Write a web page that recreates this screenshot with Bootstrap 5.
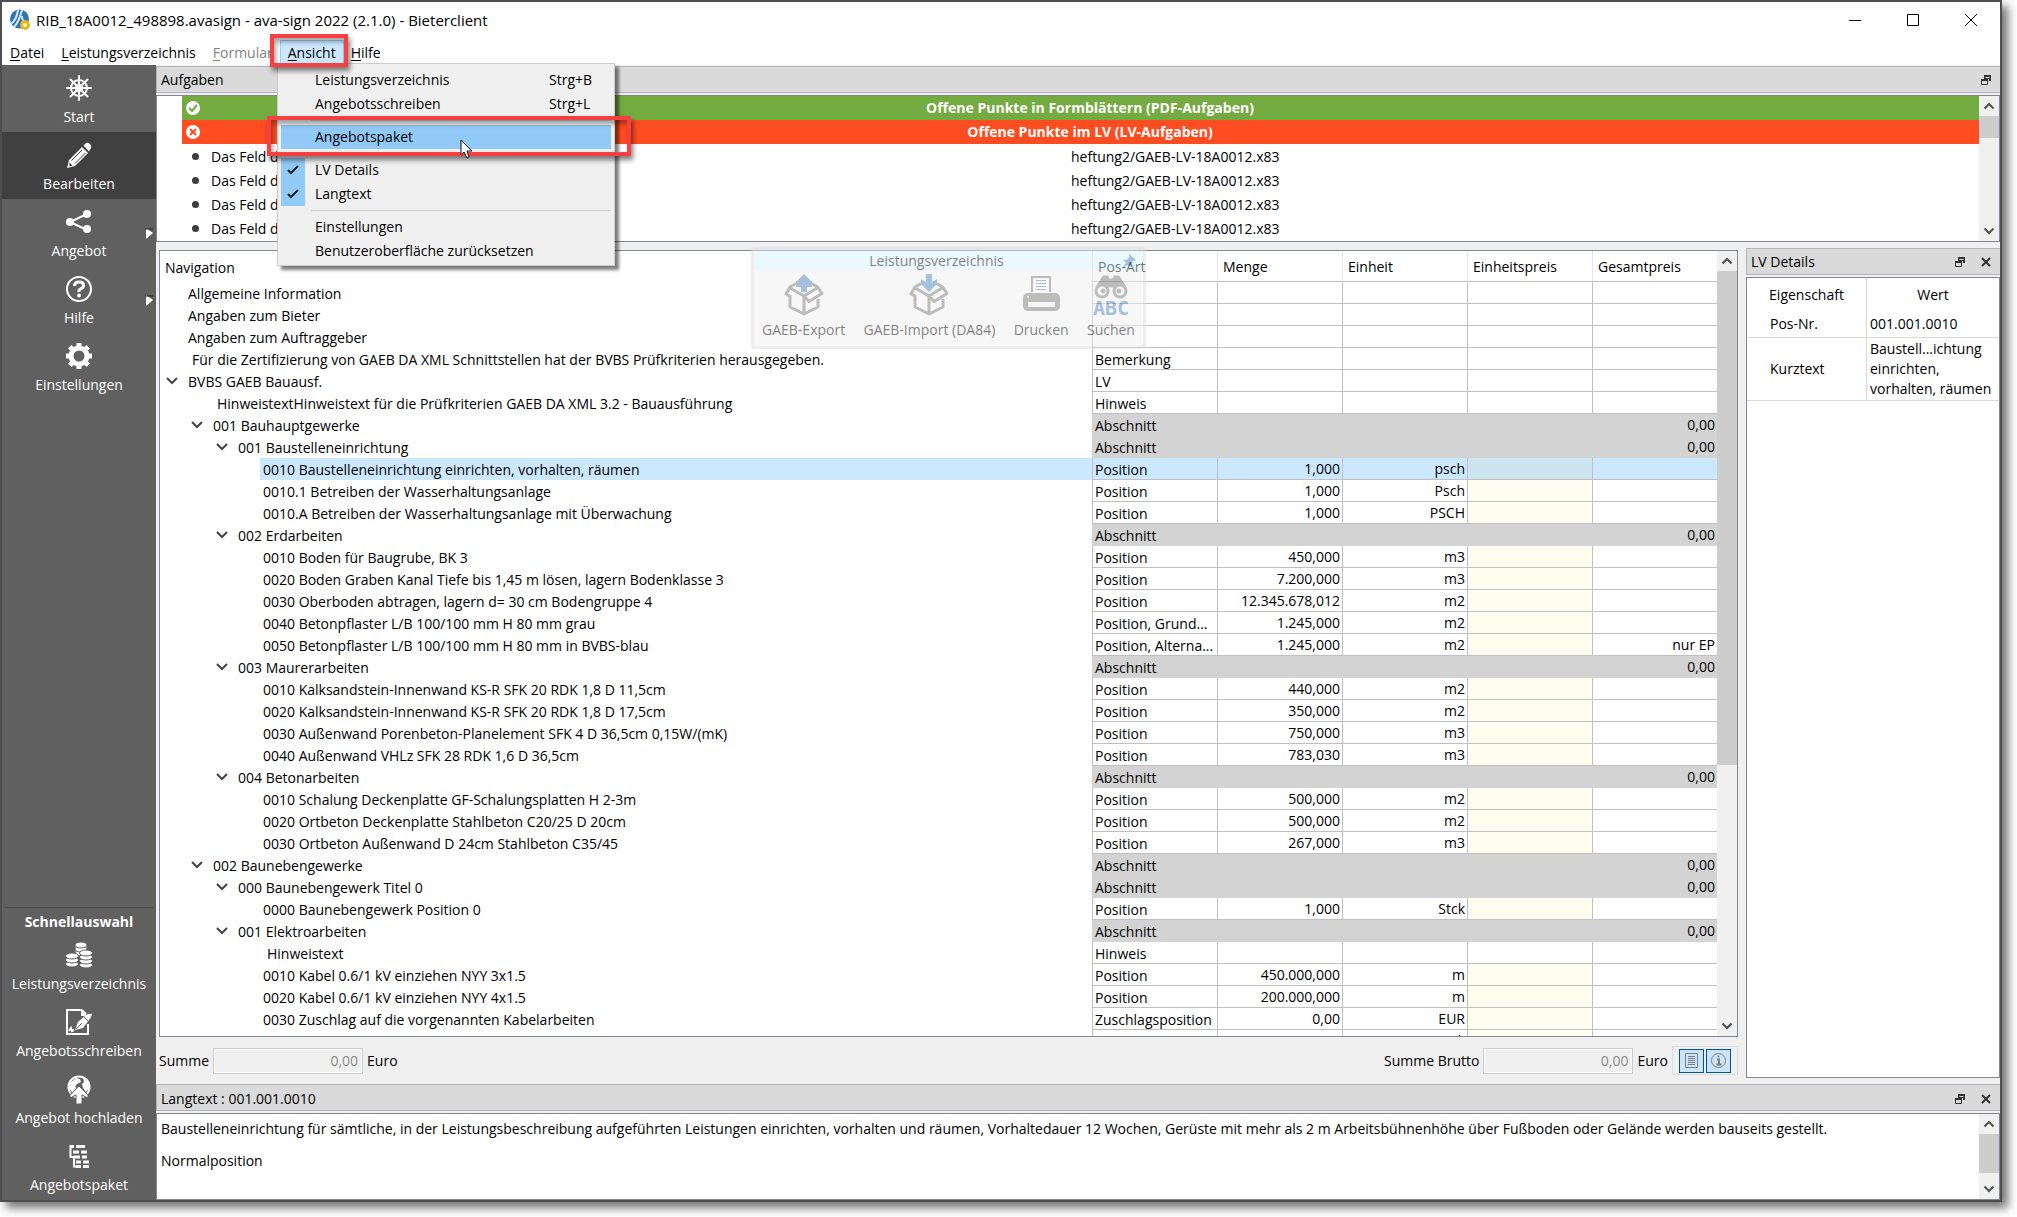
<!DOCTYPE html>
<html lang="de">
<head>
<meta charset="utf-8">
<meta name="viewport" content="width=device-width, initial-scale=1">
<title>RIB_18A0012_498898.avasign - ava-sign 2022 (2.1.0) - Bieterclient</title>
<link href="https://cdn.jsdelivr.net/npm/bootstrap@5.3.0/dist/css/bootstrap.min.css" rel="stylesheet">
<style>
  body { font-family: "Open Sans", "Noto Sans", sans-serif; font-size: 14px; line-height: 20px; color: #000; background: #fff; }
  .desk { height: 100vh; padding: 0 15px 15px 0; }
  .app-window { background: #f0f0f0; border: 2px solid #4e4e50; box-shadow: 6px 6px 9px rgba(0,0,0,.55); }
  button, input { font: inherit; color: inherit; }
  .flat { border: 0; background: none; padding: 0; line-height: 0; }

  .titlebar { height: 38px; padding: 0 0 1px 8px; background: #fff; }
  .titlebar > svg { margin-right: 6px; }
  .app-title { font-size: 15px; }
  .win-btn { width: 58px; height: 36px; }
  .menubar { height: 25px; background: #fff; padding-left: 1px; }
  .menubar button { border: 1px solid transparent; background: none; padding: 0 6px; height: 25px; line-height: 23px; margin-right: 3px; }
  .menubar u { text-underline-offset: 2px; }
  .menubar button.opened { background: #cce8ff; border-color: #99d1ff; padding: 0 7px; margin: 0; }
  .menubar button.fm { color: #838383; margin-right: 0; }

  .sidebar { width: 154px; flex: none; background: #606060; }
  .side-item { display: flex; flex-direction: column; align-items: center; gap: 4px; width: 100%; height: 67px; padding-top: 8px; border: 0; background: none; color: #fff; position: relative; }
  .side-item.current { background: #404040; }
  .side-item svg { width: 30px; height: 30px; }
  .side-item .fly { position: absolute; right: 3px; top: 28px; width: 8px; height: 12px; }
  .quick-title { border-top: 1px solid #4b4b4b; margin: 0 3px; padding: 4px 0 0; text-align: center; color: #fff; font-weight: 700; }

  .dockbar { height: 27px; border: 1px solid #b5b5b5; border-right: 0; background: #dadada; padding: 2px 8px 0 4px; }
  .dockbar .gap-x { gap: 14px; }
  .pane { background: #fff; border: 1px solid #828790; }
  .sbar { width: 20px; flex: none; background: #f0f0f0; display: flex; flex-direction: column; }
  .sbar button { height: 20px; width: 20px; flex: none; }
  .sbar .thumb { background: #cdcdcd; }

  .first-dock { margin-top: 1px; }
  .tasks { height: 147px; margin-top: 2px; flex: none; }
  .task-head { height: 24px; margin-left: 25px; padding-left: 3px; color: #fff; font-weight: 700; }
  .task-head.ok { background: #74ab41; }
  .task-head.bad { background: #ff4c20; }
  .task-line { height: 24px; padding: 2px 0 0 35px; }
  .task-line i { width: 7px; height: 7px; border-radius: 50%; background: #3c3c3c; margin-right: 12px; }
  .task-text { width: 860px; }

  .work { padding-left: 3px; }
  .lv { table-layout: fixed; width: 100%; border-collapse: separate; border-spacing: 0; }
  .lv th { height: 31px; font-weight: 400; padding: 3px 5px 0; border-bottom: 1px solid #c0c0c0; border-left: 1px solid #e5e5e5; }
  .lv th:first-child { border: 0; }
  .lv .num { width: 125px; }
  .lv td { height: 22px; line-height: 21px; padding: 0 2px; border-left: 1px solid #c0c0c0; border-bottom: 1px solid #c0c0c0; white-space: nowrap; overflow: hidden; text-overflow: ellipsis; }
  .lv td.art { padding-top: 2px; line-height: 19px; }
  .lv td.tree { border: 0; padding: 0; }
  .lv .l1 { padding-left: 25px; } .lv .l2 { padding-left: 50px; } .lv .l3 { padding-left: 75px; }
  .slot { width: 25px; flex: none; padding-left: 5px; line-height: 0; }
  .node { padding-left: 3px; height: 22px; line-height: 24px; }
  .node.note { padding-left: 7px; }
  .sum td:not(.tree) { background: #d3d3d3; border-color: #d3d3d3; }
  .price { background: #fffdf0; }
  .picked td:not(.tree), .picked .node { background: #cce8ff; }
  .picked td.price { background: #cde5f0; }

  .totals { height: 47px; }
  .totals input { height: 26px; border: 1px solid #cccccc; outline: 1px solid #fff; outline-offset: -2px; background: #f0f0f0; color: #8b8b8b; text-align: right; padding: 0 4px; border-radius: 0; }
  .in-a, .in-b { width: 150px; }
  .toolset { border: 1px solid #dcdcdc; padding: 2px 6px; height: 29px; gap: 2px; }
  .toolset button { width: 25px; height: 24px; background: #cce4f7; border: 1px solid #005499; padding: 0; line-height: 0; }

  .details { width: 254px; flex: none; margin-left: 8px; padding: 6px 0; }
  .details .pane { margin-top: 2px; }
  .props { table-layout: fixed; width: 100%; border-collapse: separate; border-spacing: 0; }
  .props th { font-weight: 400; text-align: center; height: 34px; }
  .props thead th:first-child { width: 119px; }
  .props th + th, .props td { border-left: 1px solid #d8d8d8; }
  .props td, .props tbody th { border-bottom: 1px solid #d8d8d8; height: 26px; padding: 1px 3px; }
  .props tbody th { text-align: left; padding-left: 23px; }
  .longtext { height: 87px; margin-top: 2px; }
  .longtext > div:first-child { padding: 5px 4px 0; }
  .longtext p { margin: 0 0 12px; }

  /* floating parts */
  .view-menu { position: absolute; left: 275px; top: 61px; width: 338px; margin: 0; padding: 4px 3px 2px; display: block; background: #f0f0f0; border: 1px solid #ccc; border-radius: 0; box-shadow: 4px 4px 3px rgba(0,0,0,.5); z-index: 5; font-size: 14px; color: #000; }
  .view-menu button { display: flex; align-items: center; width: 100%; height: 24px; border: 0; padding: 0; background: none; }
  .view-menu .tick { width: 24px; height: 24px; margin-right: 10px; display: flex; align-items: center; justify-content: center; }
  .view-menu .on .tick { background: #91c9f7; }
  .view-menu .hot { background: #91c9f7; }
  .view-menu kbd { font: inherit; color: inherit; background: none; padding: 0; margin-left: auto; width: 62px; text-align: left; }
  .view-menu hr { margin: 4px 0 4px 30px; border: 0; border-top: 1px solid #d0d0d0; opacity: 1; }
  .callout { position: absolute; border: 4px solid #f84040; box-shadow: 2px 4px 5px rgba(0,0,0,.5), inset 2px 4px 5px rgba(0,0,0,.35); z-index: 6; pointer-events: none; }
  .c-menu { left: 268px; top: 32px; width: 78px; height: 33px; }
  .c-item { left: 265px; top: 114px; width: 364px; height: 40px; }
  .pointer { position: absolute; left: 458px; top: 137px; z-index: 7; }
  .floatbar { position: absolute; left: 749px; top: 245px; width: 395px; height: 102px; background: #f0f0f0; border: 3px solid #dedede; border-radius: 3px; opacity: .5; z-index: 4; }
  .floatbar header { height: 20px; line-height: 22px; background: #d8f2ff; text-align: center; padding-right: 24px; position: relative; }
  .floatbar header svg { position: absolute; right: 7px; top: 4px; }
  .floatbar .tool { border: 0; background: none; padding: 0; display: flex; flex-direction: column; align-items: center; gap: 4px; }
</style>
</head>
<body>
<svg width="0" height="0" class="position-absolute" aria-hidden="true">
  <symbol id="up" viewBox="0 0 20 20"><path d="M5.500 12.500 10 8l4.500 4.500" fill="none" stroke="#505050" stroke-width="2"/></symbol>
  <symbol id="down" viewBox="0 0 20 20"><path d="M5.500 7.500 10 12l4.500-4.500" fill="none" stroke="#505050" stroke-width="2"/></symbol>
  <symbol id="float" viewBox="0 0 12 12"><path d="M4 1h7v6H9V5H4z" fill="#333"/><path d="M1.500 5.500h6v5h-6z" fill="#dadada" stroke="#333"/><path d="M1 6h7" stroke="#333" stroke-width="2"/><path d="M5.500 3.500h4" stroke="#dadada"/></symbol>
  <symbol id="shut" viewBox="0 0 12 12"><path d="m2 2 8 8M10 2l-8 8" stroke="#333" stroke-width="2"/></symbol>
  <symbol id="box" viewBox="0 0 40 42"><g fill="none" stroke="#7b7b7b" stroke-width="3" stroke-linejoin="round"><path d="M6 21v12l14 7 14-7v-8M20 23v17M6 14l14 8M12 9.500 6 13l-4 7 4 2M28 9.500l6 4-14 8.500M34 13.500l4 6-13 8-5-5.500"/></g></symbol>
</svg>

<div class="desk">
<div class="app-window h-100 d-flex flex-column position-relative">
  <header class="titlebar d-flex align-items-center">
    <svg width="20" height="22" viewBox="0 0 20 22"><circle cx="9.500" cy="10" r="9.500" fill="#2f74b5"/><path d="M8 1C7 8 5 12 1 15M12 1c-2 8-4 13-8 17M12 7c0 5 2 6 6 8" stroke="#d5e6f5" stroke-width="2" fill="none"/><circle cx="15" cy="16" r="5" fill="#e8b91c"/><circle cx="15" cy="16" r="2" fill="#fff6c0"/></svg>
    <span class="app-title">RIB_18A0012_498898.avasign - ava-sign 2022 (2.1.0) - Bieterclient</span>
    <div class="ms-auto d-flex">
      <button class="flat win-btn" aria-label="Minimieren"><svg width="12" height="12"><path d="M0 6.500h12" stroke="#000"/></svg></button>
      <button class="flat win-btn" aria-label="Maximieren"><svg width="12" height="12"><path d="M.5.5h11v11H.5z" fill="none" stroke="#000"/></svg></button>
      <button class="flat win-btn" aria-label="Schließen"><svg width="12" height="12"><path d="m0 0 12 12M12 0 0 12" stroke="#000"/></svg></button>
    </div>
  </header>
  <nav class="menubar d-flex">
    <button><u>D</u>atei</button><button><u>L</u>eistungsverzeichnis</button><button class="fm"><u>F</u>ormular</button><button class="opened"><u>A</u>nsicht</button><button><u>H</u>ilfe</button>
  </nav>

  <div class="d-flex flex-fill overflow-hidden">
    <aside class="sidebar d-flex flex-column">
      <button class="side-item"><svg viewBox="0 0 30 30" fill="none" stroke="#fff" stroke-width="2" stroke-linecap="round"><circle cx="15" cy="15" r="8"/><circle cx="15" cy="15" r="3"/><path d="M15 3v24M3 15h24M6.500 6.500l17 17M23.500 6.500l-17 17"/></svg>Start</button>
      <button class="side-item current"><svg viewBox="0 0 30 30"><path fill="#fff" d="M3 28l2-8L18 7l6 6-13 13zM19.500 5.500l2.500-2.500q2-1 4 1t1 4l-2 3.500z"/><path d="M7.500 20.500 18 10M11 23.500 21.500 13" stroke="#404040"/><path d="m5.500 22.500 3 3-3 1z" fill="#404040"/></svg>Bearbeiten</button>
      <button class="side-item"><svg viewBox="0 0 30 30"><path d="M23 7 6 15l17 8" fill="none" stroke="#fff" stroke-width="2"/><g fill="#fff"><circle cx="23" cy="7" r="4"/><circle cx="6" cy="15" r="4"/><circle cx="23" cy="22" r="4"/></g></svg>Angebot<svg class="fly" viewBox="0 0 8 12"><path d="M1 1l7 5-7 6z" fill="#fff"/><path d="M0 2h8" stroke="#222"/></svg></button>
      <button class="side-item"><svg viewBox="0 0 30 30"><circle cx="15" cy="15" r="12" fill="none" stroke="#fff" stroke-width="2"/><path d="M10.500 12q0-4 4.500-4t4.500 3.500q0 2-2.500 3.200T15 18" fill="none" stroke="#fff" stroke-width="3"/><circle cx="15" cy="21.500" r="2" fill="#fff"/></svg>Hilfe<svg class="fly" viewBox="0 0 8 12"><path d="M1 1l7 5-7 6z" fill="#fff"/><path d="M0 2h8" stroke="#222"/></svg></button>
      <button class="side-item"><svg viewBox="0 0 30 30" fill="none" stroke="#fff"><circle cx="15" cy="15" r="8" stroke-width="5"/><g stroke-width="5"><path d="M15 2v4M15 24v4M2 15h4M24 15h4M5.800 5.800l3 3M21.200 21.200l3 3M24.200 5.800l-3 3M8.800 21.200l-3 3"/></g></svg>Einstellungen</button>
      <div class="mt-auto">
        <div class="quick-title">Schnellauswahl</div>
        <button class="side-item"><svg viewBox="0 0 30 30"><g fill="#fff" stroke="#606060" stroke-width="1"><path d="M11 4v10h12V4z"/><ellipse cx="17" cy="13" rx="6" ry="3"/><ellipse cx="17" cy="9" rx="6" ry="3"/><ellipse cx="17" cy="5" rx="6" ry="3"/><ellipse cx="8" cy="24" rx="6.500" ry="3"/><ellipse cx="8" cy="20" rx="6.500" ry="3"/><ellipse cx="8" cy="16" rx="6.500" ry="3"/><ellipse cx="22" cy="25" rx="6.500" ry="3"/><ellipse cx="22" cy="21" rx="6.500" ry="3"/><ellipse cx="22" cy="17" rx="6.500" ry="3"/><ellipse cx="22" cy="13" rx="6.500" ry="3"/></g></svg>Leistungsverzeichnis</button>
        <button class="side-item"><svg viewBox="0 0 30 30"><path d="M18 3H3v24h21V17M18 3l4 4" fill="none" stroke="#fff" stroke-width="2"/><path d="M17 3v6h6z" fill="#fff"/><path d="M11 23l3-8 8-7q3-2 6-1-1 4-3 6l-6 8z" fill="#fff"/><path d="m12 22 6-6M20 10l4 4" stroke="#606060"/><path d="M5 24l2-3 1 3 2-1" stroke="#fff" stroke-width="2" fill="none"/></svg>Angebotsschreiben</button>
        <button class="side-item"><svg viewBox="0 0 30 30"><circle cx="15" cy="13" r="10.500" fill="none" stroke="#fff" stroke-width="2"/><path d="M6 9l6-5 4 1 1 3-4 2-2 3 4 2-2 3H8l-3-4zM19 4l5 4 1 6-3 4-3-4-1-4 2-2z" fill="#fff"/><path d="M15 12l9 9v3l-6-3v9h-6v-9l-6 3v-3z" fill="#fff" stroke="#606060"/></svg>Angebot hochladen</button>
        <button class="side-item"><svg viewBox="0 0 30 30" fill="none" stroke="#fff" stroke-width="3"><path d="M6.500 4v12H10M10 16v9.500h3" stroke-width="2"/><path d="M6 5.500h4M12 5.500h9M9 11h6M17 11h6M10 16h6M18 16h5M12 21h5M19 21h6M12 25.500h5M19 25.500h6"/></svg>Angebotspaket</button>
      </div>
    </aside>

    <main class="d-flex flex-column flex-fill overflow-hidden">
      <div class="dockbar first-dock d-flex align-items-center justify-content-between flex-shrink-0"><span>Aufgaben</span><button class="flat" aria-label="Abdocken"><svg width="12" height="12"><use href="#float"/></svg></button></div>
      <section class="pane tasks d-flex">
        <div class="flex-fill">
          <div class="task-head ok d-flex align-items-center"><svg width="16" height="16"><circle cx="8" cy="8" r="7" fill="#fff"/><path d="m4 8 3 3 5-6" stroke="#74ab41" stroke-width="2" fill="none"/></svg><span class="flex-fill text-center">Offene Punkte in Formblättern (PDF-Aufgaben)</span></div>
          <div class="task-head bad d-flex align-items-center"><svg width="16" height="16"><circle cx="8" cy="8" r="7" fill="#fff"/><path d="m5 5 6 6M11 5l-6 6" stroke="#ff4c20" stroke-width="2"/></svg><span class="flex-fill text-center">Offene Punkte im LV (LV-Aufgaben)</span></div>
          <div class="task-line d-flex align-items-center"><i></i><span class="task-text">Das Feld d</span><span>heftung2/GAEB-LV-18A0012.x83</span></div>
          <div class="task-line d-flex align-items-center"><i></i><span class="task-text">Das Feld d</span><span>heftung2/GAEB-LV-18A0012.x83</span></div>
          <div class="task-line d-flex align-items-center"><i></i><span class="task-text">Das Feld d</span><span>heftung2/GAEB-LV-18A0012.x83</span></div>
          <div class="task-line d-flex align-items-center"><i></i><span class="task-text">Das Feld d</span><span>heftung2/GAEB-LV-18A0012.x83</span></div>
        </div>
        <div class="sbar"><button class="flat" aria-label="Nach oben"><svg width="20" height="20"><use href="#up"/></svg></button><div class="thumb" style="height:22px"></div><button class="flat mt-auto" aria-label="Nach unten"><svg width="20" height="20"><use href="#down"/></svg></button></div>
      </section>

      <div class="work d-flex flex-fill overflow-hidden">
        <div class="d-flex flex-column flex-fill overflow-hidden pt-2">
          <section class="pane d-flex flex-fill overflow-hidden">
            <div class="flex-fill overflow-hidden">
              <table class="lv">
                <thead><tr><th>Navigation</th><th class="num">Pos-Art</th><th class="num">Menge</th><th class="num">Einheit</th><th class="num">Einheitspreis</th><th class="num">Gesamtpreis</th></tr></thead>
                <tbody id="rows"></tbody>
              </table>
            </div>
            <div class="sbar"><button class="flat" aria-label="Nach oben"><svg width="20" height="20"><use href="#up"/></svg></button><div class="thumb" style="height:63%"></div><button class="flat mt-auto" aria-label="Nach unten"><svg width="20" height="20"><use href="#down"/></svg></button></div>
          </section>
          <div class="totals d-flex align-items-center gap-1 flex-shrink-0">
            <label for="sum">Summe</label><input id="sum" class="in-a" value="0,00" readonly><span>Euro</span>
            <label for="gross" class="ms-auto">Summe Brutto</label><input id="gross" class="in-b" value="0,00" readonly><span>Euro</span>
            <div class="toolset d-flex align-items-center">
              <button aria-label="Langtext"><svg width="15" height="17"><path d="M1.500 1.500h12v14h-12z" fill="none" stroke="#7a7f85"/><path d="M4 4.500h7M4 6.500h7M4 8.500h7M4 10.500h7M4 12.500h7" stroke="#7a7f85"/></svg></button>
              <button aria-label="Details"><svg width="17" height="17"><circle cx="8.500" cy="8.500" r="7" fill="none" stroke="#7a7f85"/><path d="M7 7.500h2v5M6.500 12.500h5" stroke="#7a7f85" stroke-width="2" fill="none"/><circle cx="8.500" cy="4.500" r="1" fill="#7a7f85"/></svg></button>
            </div>
          </div>
        </div>

        <section class="details d-flex flex-column">
          <div class="dockbar d-flex align-items-center justify-content-between flex-shrink-0"><span>LV Details</span><div class="d-flex gap-x"><button class="flat" aria-label="Abdocken"><svg width="12" height="12"><use href="#float"/></svg></button><button class="flat" aria-label="Schließen"><svg width="12" height="12"><use href="#shut"/></svg></button></div></div>
          <div class="pane flex-fill">
            <table class="props">
              <thead><tr><th>Eigenschaft</th><th>Wert</th></tr></thead>
              <tbody><tr><th>Pos-Nr.</th><td>001.001.0010</td></tr><tr><th>Kurztext</th><td class="text-nowrap">Baustell...ichtung<br>einrichten,<br>vorhalten, räumen</td></tr></tbody>
            </table>
          </div>
        </section>
      </div>

      <div class="dockbar d-flex align-items-center justify-content-between flex-shrink-0"><span>Langtext : 001.001.0010</span><div class="d-flex gap-x"><button class="flat" aria-label="Abdocken"><svg width="12" height="12"><use href="#float"/></svg></button><button class="flat" aria-label="Schließen"><svg width="12" height="12"><use href="#shut"/></svg></button></div></div>
      <section class="pane longtext d-flex flex-shrink-0">
        <div class="flex-fill">
          <p>Baustelleneinrichtung für sämtliche, in der Leistungsbeschreibung aufgeführten Leistungen einrichten, vorhalten und räumen, Vorhaltedauer 12 Wochen, Gerüste mit mehr als 2 m Arbeitsbühnenhöhe über Fußboden oder Gelände werden bauseits gestellt.</p>
          <p>Normalposition</p>
        </div>
        <div class="sbar"><button class="flat" aria-label="Nach oben"><svg width="20" height="20"><use href="#up"/></svg></button><div class="thumb" style="height:39px"></div><button class="flat mt-auto" aria-label="Nach unten"><svg width="20" height="20"><use href="#down"/></svg></button></div>
      </section>
    </main>
  </div>

  <div class="floatbar">
    <header>Leistungsverzeichnis<svg width="14" height="14"><path d="M7 0l7 6-2 1-1-.5-2 3 .5 3.500L6 11l-6 3 4-5-3-3.500 3.500.500 3-3z" fill="#4d83bd"/></svg></header>
    <div class="d-flex justify-content-between px-2 pt-1">
      <button class="tool"><svg width="40" height="42"><use href="#box"/><path d="M20 0 12 8v5h5v5h6v-5h5V8z" fill="#4d83bd"/></svg>GAEB-Export</button>
      <button class="tool"><svg width="40" height="42"><use href="#box"/><path d="m20 18-8-8V5l5 3V0h6v8l5-3v5z" fill="#4d83bd"/></svg>GAEB-Import (DA84)</button>
      <button class="tool"><svg width="40" height="42"><path d="M11 18V3h18v15" fill="none" stroke="#7b7b7b" stroke-width="2"/><path d="M15 6.500h10M15 9.500h10M15 12.500h10M15 15.500h10" stroke="#4d83bd"/><rect x="2" y="19" width="37" height="18" rx="5" fill="#7b7b7b"/><path d="M7 28h27v5H7z" fill="#f0f0f0"/><circle cx="7" cy="23" r="1" fill="#f0f0f0"/></svg>Drucken</button>
      <button class="tool"><svg width="40" height="42" fill="none" stroke="#7b7b7b"><path d="M5 13 12 2h5l1 3h4l1-3h5l7 11z" fill="#7b7b7b"/><circle cx="11" cy="17" r="6" stroke-width="3" fill="#f0f0f0"/><circle cx="29" cy="17" r="6" stroke-width="3" fill="#f0f0f0"/><circle cx="12" cy="17" r="2" fill="#7b7b7b"/><circle cx="28" cy="17" r="2" fill="#7b7b7b"/><text x="20" y="41" text-anchor="middle" font-family="DejaVu Sans Mono, monospace" font-weight="700" font-size="20" fill="#4d83bd" stroke="none">ABC</text></svg>Suchen</button>
    </div>
  </div>

  <div class="view-menu dropdown-menu show">
    <button><span class="tick"></span>Leistungsverzeichnis<kbd>Strg+B</kbd></button>
    <button><span class="tick"></span>Angebotsschreiben<kbd>Strg+L</kbd></button>
    <hr>
    <button class="hot"><span class="tick"></span>Angebotspaket</button>
    <hr>
    <button class="on"><span class="tick"><svg width="12" height="10"><path d="m1 5 3 3 7-7" fill="none" stroke="#222" stroke-width="2"/></svg></span>LV Details</button>
    <button class="on"><span class="tick"><svg width="12" height="10"><path d="m1 5 3 3 7-7" fill="none" stroke="#222" stroke-width="2"/></svg></span>Langtext</button>
    <hr>
    <button><span class="tick"></span>Einstellungen</button>
    <button><span class="tick"></span>Benutzeroberfläche zurücksetzen</button>
  </div>
  <div class="callout c-menu"></div>
  <div class="callout c-item"></div>
  <svg class="pointer" width="13" height="20"><path d="M1 1v15l3-3 3 6 2-1-2-6h5z" fill="#fff" stroke="#111"/></svg>
</div>
</div>

<script>
  // [level, open node, text, Pos-Art, Menge, Einheit, Gesamtpreis]
  const data = [
    [0, 0, "Allgemeine Information"],
    [0, 0, "Angaben zum Bieter"],
    [0, 0, "Angaben zum Auftraggeber"],
    [0, 0, "Für die Zertifizierung von GAEB DA XML Schnittstellen hat der BVBS Prüfkriterien herausgegeben.", "Bemerkung"],
    [0, 1, "BVBS GAEB Bauausf.", "LV"],
    [1, 0, "HinweistextHinweistext für die Prüfkriterien GAEB DA XML 3.2 - Bauausführung", "Hinweis"],
    [1, 1, "001 Bauhauptgewerke", "Abschnitt"],
    [2, 1, "001 Baustelleneinrichtung", "Abschnitt"],
    [3, 0, "0010 Baustelleneinrichtung einrichten, vorhalten, räumen", "Position", "1,000", "psch"],
    [3, 0, "0010.1 Betreiben der Wasserhaltungsanlage", "Position", "1,000", "Psch"],
    [3, 0, "0010.A Betreiben der Wasserhaltungsanlage mit Überwachung", "Position", "1,000", "PSCH"],
    [2, 1, "002 Erdarbeiten", "Abschnitt"],
    [3, 0, "0010 Boden für Baugrube, BK 3", "Position", "450,000", "m3"],
    [3, 0, "0020 Boden Graben Kanal Tiefe bis 1,45 m lösen, lagern Bodenklasse 3", "Position", "7.200,000", "m3"],
    [3, 0, "0030 Oberboden abtragen, lagern d= 30 cm Bodengruppe 4", "Position", "12.345.678,012", "m2"],
    [3, 0, "0040 Betonpflaster L/B 100/100 mm H 80 mm grau", "Position, Grund...", "1.245,000", "m2"],
    [3, 0, "0050 Betonpflaster L/B 100/100 mm H 80 mm in BVBS-blau", "Position, Alterna...", "1.245,000", "m2", "nur EP"],
    [2, 1, "003 Maurerarbeiten", "Abschnitt"],
    [3, 0, "0010 Kalksandstein-Innenwand KS-R SFK 20 RDK 1,8 D 11,5cm", "Position", "440,000", "m2"],
    [3, 0, "0020 Kalksandstein-Innenwand KS-R SFK 20 RDK 1,8 D 17,5cm", "Position", "350,000", "m2"],
    [3, 0, "0030 Außenwand Porenbeton-Planelement SFK 4 D 36,5cm 0,15W/(mK)", "Position", "750,000", "m3"],
    [3, 0, "0040 Außenwand VHLz SFK 28 RDK 1,6 D 36,5cm", "Position", "783,030", "m3"],
    [2, 1, "004 Betonarbeiten", "Abschnitt"],
    [3, 0, "0010 Schalung Deckenplatte GF-Schalungsplatten H 2-3m", "Position", "500,000", "m2"],
    [3, 0, "0020 Ortbeton Deckenplatte Stahlbeton C20/25 D 20cm", "Position", "500,000", "m2"],
    [3, 0, "0030 Ortbeton Außenwand D 24cm Stahlbeton C35/45", "Position", "267,000", "m3"],
    [1, 1, "002 Baunebengewerke", "Abschnitt"],
    [2, 1, "000 Baunebengewerk Titel 0", "Abschnitt"],
    [3, 0, "0000 Baunebengewerk Position 0", "Position", "1,000", "Stck"],
    [2, 1, "001 Elektroarbeiten", "Abschnitt"],
    [3, 0, "Hinweistext", "Hinweis"],
    [3, 0, "0010 Kabel 0.6/1 kV einziehen NYY 3x1.5", "Position", "450.000,000", "m"],
    [3, 0, "0020 Kabel 0.6/1 kV einziehen NYY 4x1.5", "Position", "200.000,000", "m"],
    [3, 0, "0030 Zuschlag auf die vorgenannten Kabelarbeiten", "Zuschlagsposition", "0,00", "EUR"],
    [3, 0, "0040 Hohlliegendes Betonkabel bzw. mit Bet.-MG Dlock einheiten. Die Arbeiten sind einfach durchzuführen. Hohldie und", "Position", "100,000", "Stck"]
  ];
  const chev = '<svg width="13" height="10"><path d="m2 2 5 5 5-5" fill="none" stroke="#444" stroke-width="2"/></svg>';
  document.getElementById("rows").innerHTML = data.map((r, i) => {
    const [lv, open, text, art = "", qty = "", unit = "", total = ""] = r;
    const section = art === "Abschnitt";
    const note = !open && (art === "Hinweis" || art === "Bemerkung");
    return `<tr class="${section ? "sum" : ""}${i === 8 ? "picked" : ""}">
      <td class="tree"><div class="d-flex align-items-center l${lv}"><span class="slot">${open ? chev : ""}</span><span class="node flex-fill overflow-hidden${note ? " note" : ""}">${text}</span></div></td>
      <td class="art">${art}</td><td class="text-end">${qty}</td><td class="text-end">${unit}</td>
      <td class="${unit ? "price" : ""}"></td><td class="text-end">${section ? "0,00" : total}</td></tr>`;
  }).join("");
</script>
<script src="https://cdn.jsdelivr.net/npm/bootstrap@5.3.0/dist/js/bootstrap.bundle.min.js"></script>
</body>
</html>
